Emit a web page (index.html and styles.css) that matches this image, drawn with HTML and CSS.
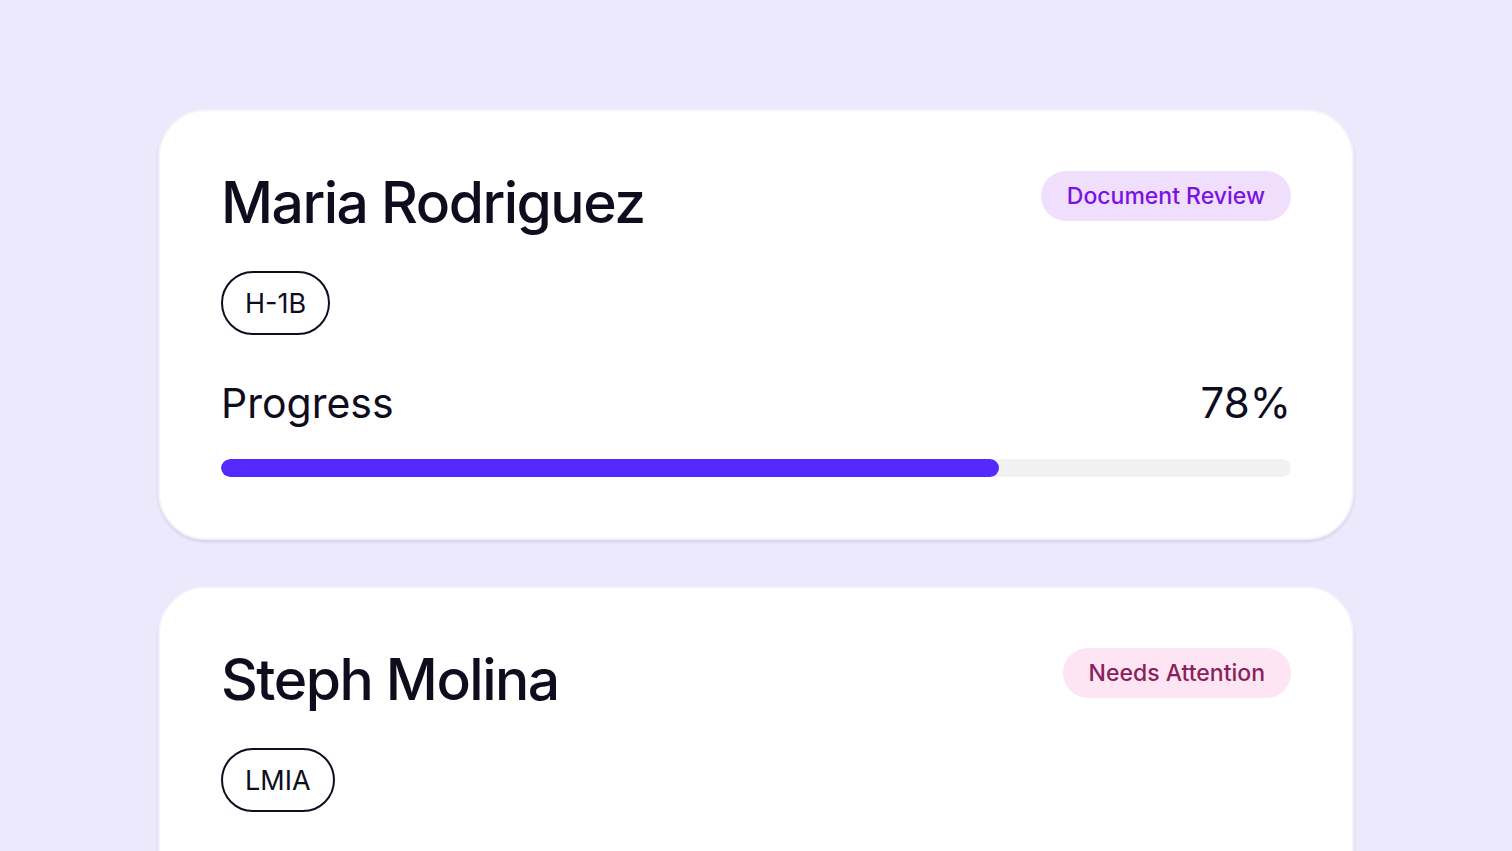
FILE: index.html
```html
<!DOCTYPE html>
<html lang="en">
<head>
<meta charset="utf-8">
<title>Cases</title>
<link rel="stylesheet" href="styles.css">
</head>
<body>
<main class="list">
  <section class="card">
    <div class="card-head">
      <h2 class="name">Maria Rodriguez</h2>
      <span class="status status-review">Document Review</span>
    </div>
    <span class="visa">H-1B</span>
    <div class="progress-row">
      <span class="progress-label">Progress</span>
      <span class="progress-value">78%</span>
    </div>
    <div class="bar"><div class="bar-fill" style="width:72.7%"></div></div>
  </section>
  <section class="card">
    <div class="card-head">
      <h2 class="name">Steph Molina</h2>
      <span class="status status-attention">Needs Attention</span>
    </div>
    <span class="visa">LMIA</span>
    <div class="progress-row">
      <span class="progress-label">Progress</span>
      <span class="progress-value">45%</span>
    </div>
    <div class="bar"><div class="bar-fill" style="width:45%"></div></div>
  </section>
</main>
</body>
</html>
```
FILE: styles.css
```css
* { box-sizing: border-box; }
html, body { margin: 0; padding: 0; }
body {
  background: #ece9fd;
  font-family: Inter, "Noto Sans", "Liberation Sans", sans-serif;
  color: #0f0c1e;
}
.list {
  width: 1196px;
  margin: 0 auto;
  padding-top: 109px;
  display: flex;
  flex-direction: column;
  gap: 46px;
}
.card {
  background: #ffffff;
  border: 2px solid #f3f2fa;
  border-radius: 48px;
  box-shadow: 0 2px 3px rgba(30, 30, 70, 0.12);
  padding: 60px 61px 61px 61px;
  display: flex;
  flex-direction: column;
  align-items: flex-start;
}
.card-head {
  width: 100%;
  height: 62px;
  display: flex;
  justify-content: space-between;
  align-items: flex-start;
}
.name {
  margin: 2px 0 0 0;
  font-size: 57px;
  line-height: 60px;
  font-weight: 500;
  letter-spacing: -1.5px;
  color: #0f0c1e;
}
.status {
  height: 50px;
  padding: 0 26px;
  border-radius: 25px;
  font-size: 23px;
  font-weight: 500;
  display: inline-flex;
  align-items: center;
}
.status-review { background: #efdffc; color: #7a12e6; }
.status-attention { background: #fde5f3; color: #8a1f5c; }
.visa {
  margin-top: 38px;
  height: 64px;
  padding: 0 22px;
  border: 2px solid #0f0c1e;
  border-radius: 32px;
  font-size: 27px;
  display: inline-flex;
  align-items: center;
  color: #0f0c1e;
}
.progress-row {
  width: 100%;
  height: 48px;
  margin-top: 44px;
  display: flex;
  justify-content: space-between;
  align-items: baseline;
  line-height: 48px;
}
.progress-label { font-size: 41px; }
.progress-value { font-size: 42px; }
.bar {
  margin-top: 32px;
  width: 100%;
  height: 18px;
  border-radius: 9px;
  background: #f1f1f1;
  overflow: hidden;
}
.bar-fill {
  height: 100%;
  border-radius: 9px;
  background: #5429fd;
}
```
